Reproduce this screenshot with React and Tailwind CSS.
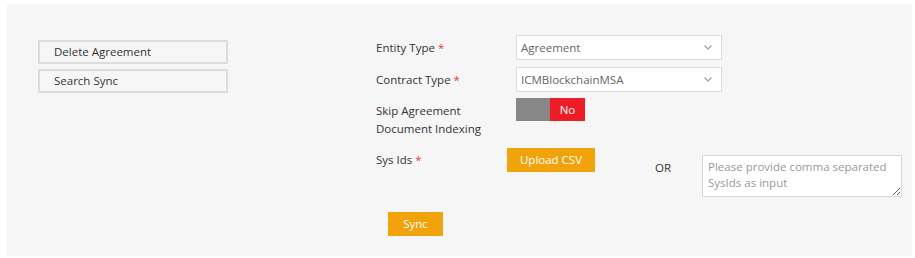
const font = { fontFamily: '"Open Sans", "Noto Sans", sans-serif' };

function Chevron() {
  return (
    <svg width="8" height="5" viewBox="0 0 8 5" className="text-[#999]">
      <path d="M0.5 0.5l3.5 3.5 3.5-3.5" fill="none" stroke="currentColor" strokeWidth="1.1" />
    </svg>
  );
}

function Select({ value }) {
  return (
    <div className="flex items-center justify-between w-[206px] h-[25px] bg-white border border-[#dcdcdc] pl-[4px] pr-[9px] text-[#666]">
      <span>{value}</span>
      <Chevron />
    </div>
  );
}

function Req() {
  return <span className="text-[#e8353b] ml-[3px]">*</span>;
}

export default function App() {
  return (
    <div className="bg-white w-[915px] h-[258px] pt-[4px] pl-[7px]" style={font}>
      <div className="flex w-[905px] h-[252px] bg-[#f6f6f6] pl-[31px] pt-[31px] text-[11.5px] text-[#333]">
        {/* left actions */}
        <div className="flex flex-col gap-[5px] w-[190px] mt-[5px]">
          <button className="h-[24px] border-2 border-[#dcdcdc] bg-[#f6f6f6] text-left pl-[14px] text-[#333]">
            Delete Agreement
          </button>
          <button className="h-[24px] border-2 border-[#dcdcdc] bg-[#f6f6f6] text-left pl-[14px] text-[#333]">
            Search Sync
          </button>
        </div>

        {/* form */}
        <div className="ml-[148px] flex flex-col">
          <div className="flex items-center h-[25px]">
            <div className="w-[140px]">
              Entity Type<Req />
            </div>
            <Select value="Agreement" />
          </div>
          <div className="flex items-center h-[25px] mt-[7px]">
            <div className="w-[140px]">
              Contract Type<Req />
            </div>
            <Select value="ICMBlockchainMSA" />
          </div>
          <div className="flex items-start mt-[6px]">
            <div className="w-[140px] leading-[18px] mt-[4px]">
              Skip Agreement
              <br />
              Document Indexing
            </div>
            <div className="flex h-[23px] w-[69px]">
              <div className="w-[34px] bg-[#878787]" />
              <div className="flex-1 bg-[#ee1c25] text-white flex items-center justify-center">No</div>
            </div>
          </div>
          <div className="flex items-start mt-[10px]">
            <div className="w-[131px] leading-[18px] mt-[3px]">
              Sys Ids<Req />
            </div>
            <button className="w-[88px] h-[24px] bg-[#f1a30b] text-white">Upload CSV</button>
            <div className="ml-[60px] mt-[11px] leading-[18px]">OR</div>
            <textarea
              className="ml-[31px] mt-[7px] w-[200px] h-[42px] bg-white border border-[#d6d6d6] px-[5px] py-[3px] leading-[16px] placeholder:text-[#999] outline-none"
              placeholder="Please provide comma separated SysIds as input"
            />
          </div>
          <button className="ml-[12px] mt-[15px] w-[55px] h-[24px] bg-[#f1a30b] text-white">Sync</button>
        </div>
      </div>
    </div>
  );
}
